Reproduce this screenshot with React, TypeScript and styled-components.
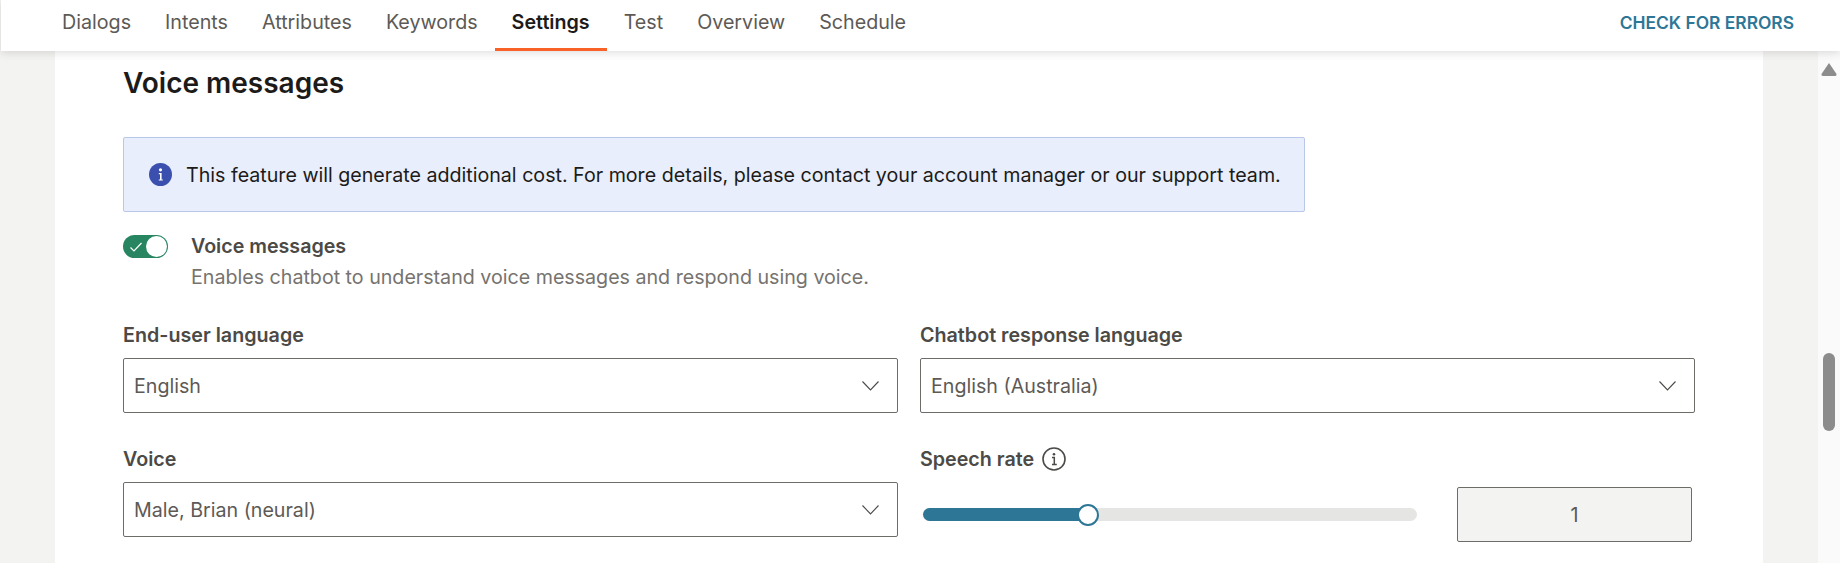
import React from "react";
import styled, { createGlobalStyle } from "styled-components";

const Global = createGlobalStyle`
  html, body { margin: 0; padding: 0; height: 100%; overflow: hidden; }
  body { font-family: Inter, "Noto Sans", "Liberation Sans", sans-serif; background: #f3f3f2; }
  * { box-sizing: border-box; }
`;

const Page = styled.div`
  width: 1840px;
  height: 563px;
  display: flex;
  flex-direction: column;
  overflow: hidden;
  background: #f3f3f2;
`;

const Header = styled.header`
  position: relative;
  z-index: 2;
  flex: 0 0 51px;
  margin-left: 1px;
  padding: 0 46px 0 44px;
  display: flex;
  align-items: stretch;
  justify-content: space-between;
  background: #fff;
  box-shadow: 0 2px 8px rgba(60, 58, 54, 0.16);
`;

const Tabs = styled.nav`
  display: flex;
`;

const Tab = styled.a<{ $active?: boolean }>`
  display: flex;
  align-items: center;
  height: 51px;
  padding: 0 17px 4px;
  font-size: 19.7px;
  font-weight: ${(p) => (p.$active ? 600 : 400)};
  color: ${(p) => (p.$active ? "#1c1b19" : "#5d5a56")};
  border-bottom: 3px solid ${(p) => (p.$active ? "#f96127" : "transparent")};
`;

const CheckButton = styled.button`
  border: 0;
  background: none;
  padding: 0 0 6px;
  font: 600 17.4px Inter, sans-serif;
  color: #2e7696;
  text-transform: uppercase;
`;

const Body = styled.div`
  flex: 1;
  min-height: 0;
  display: flex;
`;

const Main = styled.main`
  flex: 1;
  min-width: 0;
  padding: 0 55px;
`;

const Card = styled.section`
  height: 100%;
  background: #fff;
  padding: 17px 68px 0;
`;

const Title = styled.h2`
  margin: 0;
  height: 30px;
  line-height: 30px;
  font-size: 28px;
  font-weight: 600;
  color: #1c1b19;
`;

const Alert = styled.div`
  width: 1182px;
  height: 75px;
  margin-top: 39px;
  padding: 0 20px 0 25px;
  display: flex;
  align-items: center;
  gap: 14px;
  background: #e8eefc;
  border: 1px solid #b9c7e8;
  border-radius: 2px;
  font-size: 19.65px;
  color: #1c1b19;
`;

const ToggleRow = styled.div`
  display: flex;
  gap: 24px;
  margin-top: 23px;
`;

const Switch = styled.span`
  flex: 0 0 45px;
  height: 23px;
  padding: 1px;
  display: flex;
  align-items: center;
  justify-content: space-between;
  border-radius: 12px;
  background: #278661;
`;

const Knob = styled.span`
  width: 21px;
  height: 21px;
  border-radius: 50%;
  background: #fff;
`;

const ToggleText = styled.div`
  display: flex;
  flex-direction: column;
  margin-top: -1px;
  margin-left: -1px;
`;

const ToggleTitle = styled.div`
  height: 24px;
  line-height: 24px;
  font-size: 19.65px;
  font-weight: 600;
  color: #4c4a46;
`;

const ToggleHint = styled.div`
  height: 24px;
  margin-top: 7px;
  line-height: 24px;
  font-size: 19.65px;
  color: #76736f;
`;

const Fields = styled.div`
  display: grid;
  grid-template-columns: 775px 775px;
  column-gap: 22px;
  row-gap: 34px;
  margin-top: 34px;
`;

const Field = styled.div`
  display: flex;
  flex-direction: column;
`;

const Label = styled.label`
  display: flex;
  align-items: center;
  gap: 8px;
  height: 24px;
  margin-bottom: 11px;
  font-size: 19.7px;
  font-weight: 600;
  color: #4c4a46;
`;

const Select = styled.div`
  height: 55px;
  padding: 0 18px 0 10px;
  display: flex;
  align-items: center;
  justify-content: space-between;
  background: #fff;
  border: 1px solid #6e6c68;
  border-radius: 2px;
  font-size: 19.65px;
  color: #5d5a56;
`;

const SliderRow = styled.div`
  display: flex;
  align-items: center;
  justify-content: space-between;
  height: 55px;
  padding: 0 3px;
  margin-top: 5px;
`;

const Track = styled.div`
  width: 494px;
  height: 13px;
  display: flex;
  align-items: center;
  border-radius: 7px;
  background: #e5e5e3;
`;

const TrackFill = styled.div`
  height: 13px;
  border-radius: 7px 0 0 7px;
  background: #2e7696;
`;

const Thumb = styled.span`
  flex: 0 0 22px;
  height: 22px;
  margin-left: -11px;
  border-radius: 50%;
  background: #fff;
  border: 2px solid #2e7696;
`;

const NumberBox = styled.div`
  width: 235px;
  height: 55px;
  display: flex;
  align-items: center;
  justify-content: center;
  background: #f3f3f2;
  border: 1px solid #6e6c68;
  border-radius: 2px;
  font-size: 19.65px;
  color: #5d5a56;
`;

const ScrollTrack = styled.aside`
  flex: 0 0 22px;
  display: flex;
  flex-direction: column;
  align-items: center;
  padding-top: 12px;
  background: #fafafa;
`;

const ScrollThumb = styled.div`
  width: 12px;
  height: 78px;
  margin-top: 277px;
  border-radius: 6px;
  background: #8c8c8c;
`;

const Chevron = () => (
  <svg width="17" height="10" viewBox="0 0 17 10" fill="none" aria-hidden="true">
    <path d="M0.5 0.5 L8.5 9 L16.5 0.5" stroke="#4c4a46" strokeWidth="1.1" />
  </svg>
);

const InfoOutline = () => (
  <svg width="24" height="24" viewBox="0 0 24 24" fill="none" aria-hidden="true">
    <circle cx="12" cy="12" r="11" stroke="#4c4a46" strokeWidth="1.6" />
    <circle cx="12" cy="7.2" r="1.3" fill="#4c4a46" />
    <path d="M10 10.6h2.3v7M10 17.6h4.8" stroke="#4c4a46" strokeWidth="1.5" />
  </svg>
);

const InfoFilled = () => (
  <svg width="23" height="23" viewBox="0 0 23 23" aria-hidden="true" style={{ flex: "none" }}>
    <circle cx="11.5" cy="11.5" r="11.5" fill="#3a4fae" />
    <circle cx="11.5" cy="6.8" r="1.6" fill="#fff" />
    <path d="M9.8 10h2.8v6.4h1.2v1.2H9.8v-1.2h1.2v-5.2H9.8z" fill="#fff" />
  </svg>
);

const Check = () => (
  <svg width="14" height="12" viewBox="0 0 14 12" fill="none" aria-hidden="true" style={{ marginLeft: 5 }}>
    <path d="M1.5 6.5 L5 10 L12.5 2" stroke="#fff" strokeWidth="1.2" />
  </svg>
);

const ScrollArrow = () => (
  <svg width="16" height="13" viewBox="0 0 16 13" aria-hidden="true">
    <path d="M8 0 L15.5 11 Q16 13 14 13 H2 Q0 13 0.5 11 Z" fill="#8c8c8c" />
  </svg>
);

const tabs = ["Dialogs", "Intents", "Attributes", "Keywords", "Settings", "Test", "Overview", "Schedule"];

export default function App() {
  return (
    <Page>
      <Global />
      <Header>
        <Tabs>
          {tabs.map((t) => (
            <Tab key={t} $active={t === "Settings"}>{t}</Tab>
          ))}
        </Tabs>
        <CheckButton>Check for errors</CheckButton>
      </Header>
      <Body>
        <Main>
          <Card>
            <Title>Voice messages</Title>
            <Alert>
              <InfoFilled />
              This feature will generate additional cost. For more details, please contact your account manager or our support team.
            </Alert>
            <ToggleRow>
              <Switch>
                <Check />
                <Knob />
              </Switch>
              <ToggleText>
                <ToggleTitle>Voice messages</ToggleTitle>
                <ToggleHint>Enables chatbot to understand voice messages and respond using voice.</ToggleHint>
              </ToggleText>
            </ToggleRow>
            <Fields>
              <Field>
                <Label>End-user language</Label>
                <Select>English<Chevron /></Select>
              </Field>
              <Field>
                <Label>Chatbot response language</Label>
                <Select>English (Australia)<Chevron /></Select>
              </Field>
              <Field>
                <Label>Voice</Label>
                <Select>Male, Brian (neural)<Chevron /></Select>
              </Field>
              <Field>
                <Label>Speech rate <InfoOutline /></Label>
                <SliderRow>
                  <Track>
                    <TrackFill style={{ width: `${(165 / 494) * 100}%` }} />
                    <Thumb />
                  </Track>
                  <NumberBox>1</NumberBox>
                </SliderRow>
              </Field>
            </Fields>
          </Card>
        </Main>
        <ScrollTrack>
          <ScrollArrow />
          <ScrollThumb />
        </ScrollTrack>
      </Body>
    </Page>
  );
}
